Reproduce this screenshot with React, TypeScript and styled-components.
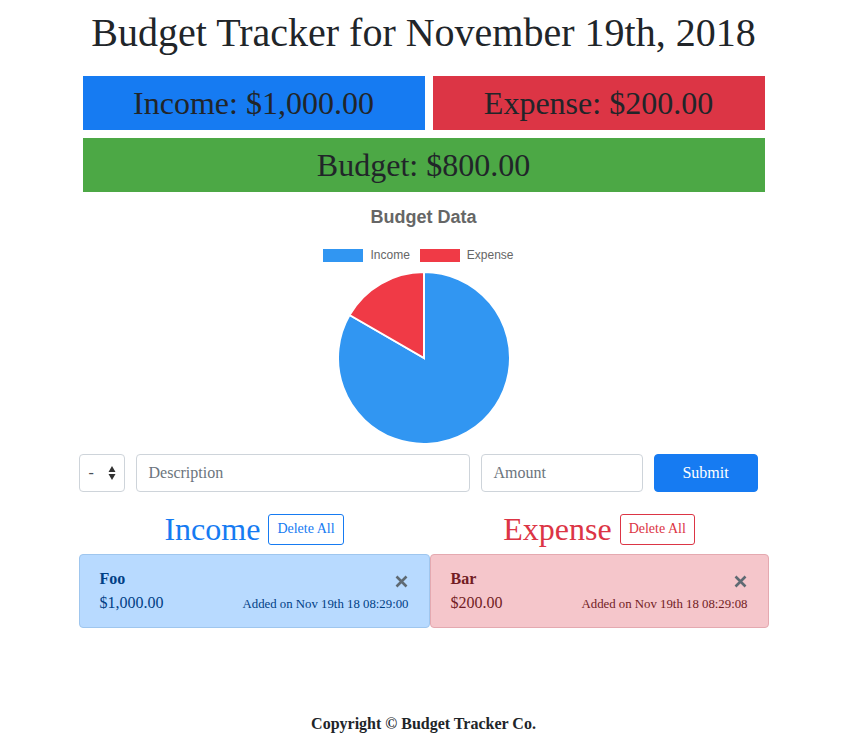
import React from 'react';
import styled, { createGlobalStyle } from 'styled-components';

const GlobalStyle = createGlobalStyle`
  * { box-sizing: border-box; }
  body {
    margin: 0;
    font-family: "Liberation Serif", "Times New Roman", serif;
    color: #212529;
    background: #fff;
  }
`;

const Page = styled.div`
  min-height: 100vh;
  display: flex;
  flex-direction: column;
`;

const Container = styled.main`
  width: 690px;
  margin: 0 auto;
  flex: 1;
`;

const Title = styled.h1`
  margin: 9px 0 19px;
  font-size: 40px;
  font-weight: 400;
  line-height: 48px;
  text-align: center;
`;

const Totals = styled.div`
  padding: 0 4px;
  display: grid;
  grid-template-columns: 342px 332px;
  gap: 8px 8px;
`;

const TotalBox = styled.div<{ $bg: string; $wide?: boolean }>`
  grid-column: ${(p) => (p.$wide ? '1 / span 2' : 'auto')};
  background: ${(p) => p.$bg};
  height: 54px;
  display: flex;
  align-items: center;
  justify-content: center;
  font-size: 32px;
  line-height: 1;
`;

const Chart = styled.section`
  display: flex;
  flex-direction: column;
  align-items: center;
  margin-top: 14px;
  font-family: "Liberation Sans", Arial, sans-serif;
  color: #666;
`;

const ChartTitle = styled.div`
  font-size: 18px;
  font-weight: 700;
  line-height: 22px;
`;

const Legend = styled.div`
  display: flex;
  gap: 10px;
  margin-top: 20px;
  padding-right: 10px;
  font-size: 12px;
  line-height: 14px;
`;

const LegendItem = styled.div`
  display: flex;
  align-items: center;
  gap: 7px;
`;

const Swatch = styled.span<{ $color: string }>`
  width: 40px;
  height: 13px;
  background: ${(p) => p.$color};
`;

const Pie = styled.svg`
  margin-top: 9px;
  display: block;
`;

const Form = styled.form`
  display: flex;
  gap: 11px;
  margin-top: 9px;
`;

const Field = styled.div<{ $w: number }>`
  width: ${(p) => p.$w}px;
  height: 38px;
  border: 1px solid #ced4da;
  border-radius: 4px;
  display: flex;
  align-items: center;
  padding: 0 12px;
  font-size: 16px;
  color: #6c757d;
  background: #fff;
`;

const SelectField = styled(Field)`
  justify-content: space-between;
  padding: 0 8px 0 9px;
  color: #495057;
`;

const Arrows = styled.svg`
  display: block;
`;

const SubmitButton = styled.button`
  width: 104px;
  height: 38px;
  border: 1px solid #167bf2;
  background: #167bf2;
  color: #fff;
  border-radius: 4px;
  font-family: inherit;
  font-size: 16px;
`;

const Lists = styled.div`
  display: grid;
  grid-template-columns: 351px 1fr;
  margin-top: 18px;
`;

const Column = styled.div`
  display: flex;
  flex-direction: column;
`;

const Heading = styled.div<{ $color: string }>`
  display: flex;
  align-items: center;
  justify-content: center;
  gap: 8px;
  height: 38px;
  margin-bottom: 6px;
  color: ${(p) => p.$color};
  font-size: 32px;
`;

const OutlineButton = styled.button<{ $color: string }>`
  height: 31px;
  padding: 0 8px;
  border: 1px solid ${(p) => p.$color};
  color: ${(p) => p.$color};
  background: #fff;
  border-radius: 3px;
  font-family: inherit;
  font-size: 14px;
`;

const Card = styled.div<{ $bg: string; $border: string; $color: string }>`
  position: relative;
  height: 74px;
  padding: 12px 20px;
  background: ${(p) => p.$bg};
  border: 1px solid ${(p) => p.$border};
  border-radius: 4px;
  color: ${(p) => p.$color};
`;

const CardName = styled.div`
  font-weight: 700;
  font-size: 16px;
  line-height: 24px;
`;

const CardRow = styled.div`
  display: flex;
  justify-content: space-between;
  align-items: baseline;
  line-height: 24px;
`;

const Amount = styled.span`
  font-size: 16px;
`;

const Added = styled.span`
  font-size: 12.8px;
`;

const Close = styled.svg`
  position: absolute;
  right: 21px;
  top: 20px;
`;

const Footer = styled.footer`
  text-align: center;
  font-weight: 700;
  font-size: 16px;
  line-height: 20px;
  padding-bottom: 11px;
`;

const CloseIcon = () => (
  <Close width="13" height="13" viewBox="0 0 13 13">
    <path d="M1.5 1.5 L11.5 11.5 M11.5 1.5 L1.5 11.5" stroke="#5f6a73" strokeWidth="2.6" strokeLinecap="butt" />
  </Close>
);

const entries = [
  { kind: 'income', name: 'Foo', amount: '$1,000.00', added: 'Added on Nov 19th 18 08:29:00' },
  { kind: 'expense', name: 'Bar', amount: '$200.00', added: 'Added on Nov 19th 18 08:29:08' },
];

const palette = {
  income: { head: '#167bf2', bg: '#b8daff', border: '#9fc6ee', text: '#004085', label: 'Income' },
  expense: { head: '#dc3545', bg: '#f5c6cb', border: '#e4a9b0', text: '#721c24', label: 'Expense' },
};

export default function App() {
  const r = 86;
  const cx = 87;
  const cy = 87;
  const end = (210 * Math.PI) / 180;
  const ex = cx + r * Math.cos(end);
  const ey = cy + r * Math.sin(end);

  return (
    <Page>
      <GlobalStyle />
      <Container>
        <Title>Budget Tracker for November 19th, 2018</Title>
        <Totals>
          <TotalBox $bg="#167bf2">Income: $1,000.00</TotalBox>
          <TotalBox $bg="#dc3545">Expense: $200.00</TotalBox>
          <TotalBox $bg="#4ca845" $wide>Budget: $800.00</TotalBox>
        </Totals>

        <Chart>
          <ChartTitle>Budget Data</ChartTitle>
          <Legend>
            <LegendItem><Swatch $color="#3196f2" />Income</LegendItem>
            <LegendItem><Swatch $color="#f03a46" />Expense</LegendItem>
          </Legend>
          <Pie width="174" height="174" viewBox="0 0 174 174">
            <path d={`M${cx} ${cy} L${cx} ${cy - r} A${r} ${r} 0 1 1 ${ex} ${ey} Z`} fill="#3196f2" stroke="#fff" strokeWidth="2" />
            <path d={`M${cx} ${cy} L${ex} ${ey} A${r} ${r} 0 0 1 ${cx} ${cy - r} Z`} fill="#f03a46" stroke="#fff" strokeWidth="2" />
          </Pie>
        </Chart>

        <Form onSubmit={(e) => e.preventDefault()}>
          <SelectField $w={46}>
            <span>-</span>
            <Arrows width="8" height="16" viewBox="0 0 8 16">
              <path d="M4 1 L7.5 7 L0.5 7 Z M0.5 9 L7.5 9 L4 15 Z" fill="#333" />
            </Arrows>
          </SelectField>
          <Field $w={334}>Description</Field>
          <Field $w={162}>Amount</Field>
          <SubmitButton type="submit">Submit</SubmitButton>
        </Form>

        <Lists>
          {entries.map((e) => {
            const c = palette[e.kind as 'income' | 'expense'];
            return (
              <Column key={e.kind}>
                <Heading $color={c.head}>
                  {c.label}
                  <OutlineButton $color={c.head}>Delete All</OutlineButton>
                </Heading>
                <Card $bg={c.bg} $border={c.border} $color={c.text}>
                  <CardName>{e.name}</CardName>
                  <CardRow>
                    <Amount>{e.amount}</Amount>
                    <Added>{e.added}</Added>
                  </CardRow>
                  <CloseIcon />
                </Card>
              </Column>
            );
          })}
        </Lists>
      </Container>
      <Footer>Copyright © Budget Tracker Co.</Footer>
    </Page>
  );
}
